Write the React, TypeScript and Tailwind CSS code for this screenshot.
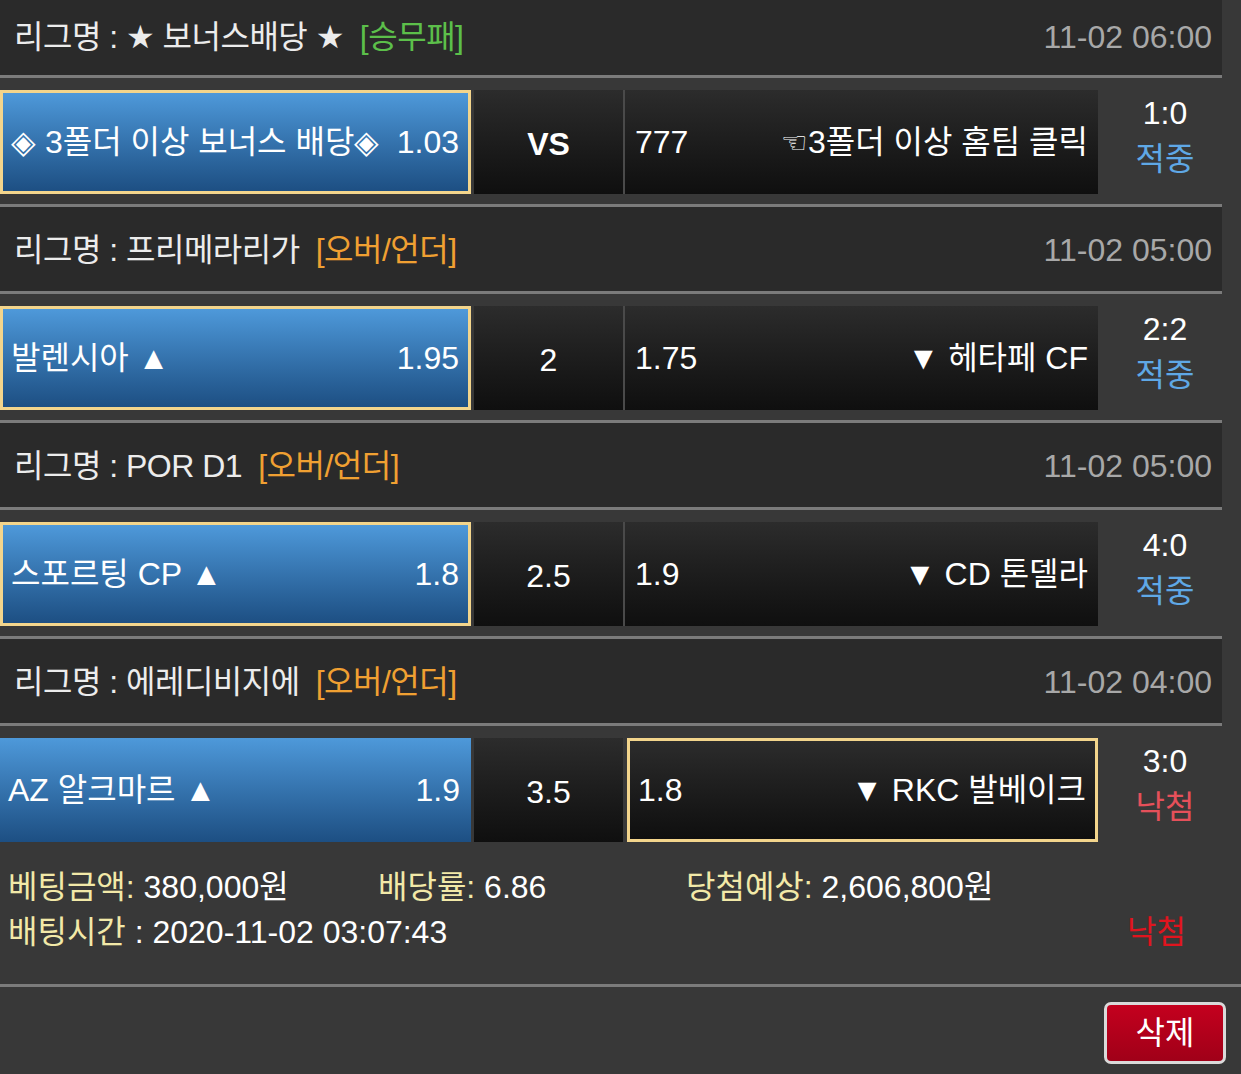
import React from 'react';

type Bet = {
  league: React.ReactNode;
  tag: string;
  tagColor: string;
  time: string;
  home: string;
  homeOdds: string;
  mid: string;
  midBold?: boolean;
  awayOdds: string;
  away: React.ReactNode;
  score: string;
  result: string;
  pick: 'home' | 'away';
};

const Star = () => <span className="font-['DejaVu_Sans']">★</span>;

const bets: Bet[] = [
  {
    league: (
      <>
        <Star /> 보너스배당 <Star />
      </>
    ),
    tag: '[승무패]',
    tagColor: 'text-[#5cbf4a]',
    time: '11-02 06:00',
    home: '◈ 3폴더 이상 보너스 배당◈',
    homeOdds: '1.03',
    mid: 'VS',
    midBold: true,
    awayOdds: '777',
    away: (
      <>
        <span className="text-[30px] font-['DejaVu_Sans'] leading-none">☜</span>3폴더 이상 홈팀 클릭
      </>
    ),
    score: '1:0',
    result: '적중',
    pick: 'home',
  },
  {
    league: '프리메라리가',
    tag: '[오버/언더]',
    tagColor: 'text-[#f0a032]',
    time: '11-02 05:00',
    home: '발렌시아 ▲',
    homeOdds: '1.95',
    mid: '2',
    awayOdds: '1.75',
    away: '▼ 헤타페 CF',
    score: '2:2',
    result: '적중',
    pick: 'home',
  },
  {
    league: 'POR D1',
    tag: '[오버/언더]',
    tagColor: 'text-[#f0a032]',
    time: '11-02 05:00',
    home: '스포르팅 CP ▲',
    homeOdds: '1.8',
    mid: '2.5',
    awayOdds: '1.9',
    away: '▼ CD 톤델라',
    score: '4:0',
    result: '적중',
    pick: 'home',
  },
  {
    league: '에레디비지에',
    tag: '[오버/언더]',
    tagColor: 'text-[#f0a032]',
    time: '11-02 04:00',
    home: 'AZ 알크마르 ▲',
    homeOdds: '1.9',
    mid: '3.5',
    awayOdds: '1.8',
    away: '▼ RKC 발베이크',
    score: '3:0',
    result: '낙첨',
    pick: 'away',
  },
];

function BetBlock({ bet, first, last }: { bet: Bet; first: boolean; last: boolean }) {
  return (
    <div>
      <div
        className={`h-[87px] bg-[#2a2a2a] border-b-[3px] border-[#7b7b7b] flex items-center justify-between pl-[14px] pr-[10px] ${
          first ? 'pt-[8px]' : 'pt-[2px]'
        }`}
      >
        <div className="text-[#ececec] whitespace-nowrap tracking-[-0.5px]">
          리그명 : {bet.league}
          <span className={`ml-[16px] ${bet.tagColor}`}>{bet.tag}</span>
        </div>
        <div className="text-[#a8a8a8]">{bet.time}</div>
      </div>
      <div className={`flex items-start pt-[12px] ${last ? 'h-[126px]' : 'h-[129px] border-b-[3px] border-[#7b7b7b]'}`}>
        <div
          className={`w-[471px] h-[104px] flex items-center justify-between bg-gradient-to-b from-[#4e99da] to-[#1d4f83] text-white whitespace-nowrap ${
            bet.pick === 'home' ? 'border-[3px] border-[#f3d58c] pl-[8px] pr-[9px]' : 'pl-[8px] pr-[11px]'
          }`}
        >
          <span>{bet.home}</span>
          <span>{bet.homeOdds}</span>
        </div>
        <div
          className={`ml-[3px] w-[149px] h-[104px] flex items-center justify-center pt-[4px] bg-gradient-to-b from-[#2c2c2c] to-[#0f0f0f] text-white ${
            bet.midBold ? 'font-bold' : ''
          }`}
        >
          {bet.mid}
        </div>
        <div
          className={`h-[104px] flex items-center justify-between bg-gradient-to-b from-[#2c2c2c] to-[#0f0f0f] text-white whitespace-nowrap ${
            bet.pick === 'away'
              ? 'ml-[4px] w-[471px] border-[3px] border-[#f3d58c] pl-[8px] pr-[9px]'
              : 'w-[475px] border-l-[2px] border-[#4a4a4a] pl-[10px] pr-[10px]'
          }`}
        >
          <span>{bet.awayOdds}</span>
          <span>{bet.away}</span>
        </div>
        <div className="flex-1 flex flex-col items-center pl-[10px] leading-[46px]">
          <span className="text-white">{bet.score}</span>
          <span className={bet.result === '적중' ? 'text-[#5fa8e6]' : 'text-[#e5505a]'}>{bet.result}</span>
        </div>
      </div>
    </div>
  );
}

export default function App() {
  return (
    <div className="w-[1241px] h-[1074px] overflow-hidden bg-[#383838] text-[32px] leading-none font-['Liberation_Sans','Noto_Sans_CJK_KR',sans-serif]">
      <div className="w-[1222px] -mt-[9px]">
        {bets.map((b, i) => (
          <BetBlock key={i} bet={b} first={i === 0} last={i === bets.length - 1} />
        ))}
      </div>
      <div className="h-[132px] pt-[13px] pl-[8px] leading-[45px] text-white">
        <div className="flex">
          <div className="w-[370px]">
            <span className="text-[#f2e9a8]">베팅금액:</span> 380,000원
          </div>
          <div className="w-[308px]">
            <span className="text-[#f2e9a8]">배당률:</span> 6.86
          </div>
          <div>
            <span className="text-[#f2e9a8]">당첨예상:</span> 2,606,800원
          </div>
        </div>
        <div className="flex justify-between pr-[55px]">
          <div>
            <span className="text-[#f2e9a8]">배팅시간</span> : 2020-11-02 03:07:43
          </div>
          <div className="text-[#e0141e]">낙첨</div>
        </div>
      </div>
      <div className="border-t-[3px] border-[#7b7b7b] flex justify-end pt-[15px] pr-[15px]">
        <button className="w-[122px] h-[62px] rounded-[7px] border-[3px] border-[#dadada] bg-gradient-to-b from-[#c4001e] to-[#a00018] text-white text-[32px] flex items-center justify-center">
          삭제
        </button>
      </div>
    </div>
  );
}
